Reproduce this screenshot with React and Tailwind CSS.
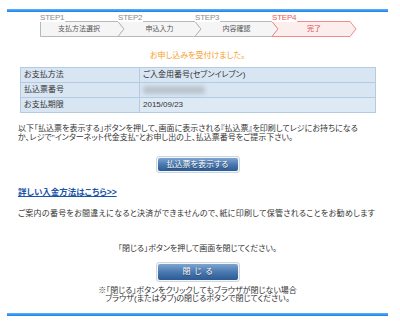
import React from "react";

const FONT = { fontFamily: "'Liberation Sans','Noto Sans CJK JP',sans-serif" };

const steps = [
  { label: "STEP1", name: "支払方法選択", w: 78, first: true },
  { label: "STEP2", name: "申込入力", w: 77 },
  { label: "STEP3", name: "内容確認", w: 77 },
  { label: "STEP4", name: "完了", w: 78, active: true },
];

function Step({ s }) {
  const w = s.w;
  const pts = s.first
    ? `0.5,0.5 ${w},0.5 ${w + 6},8 ${w},15.5 0.5,15.5`
    : `0,0.5 ${w},0.5 ${w + 6},8 ${w},15.5 0,15.5 6,8`;
  return (
    <div className="relative h-[22px] shrink-0" style={{ width: w }}>
      <svg
        className="absolute left-0 top-[6px] overflow-visible"
        width={w + 6}
        height="16"
      >
        <polygon
          points={pts}
          fill={s.active ? "#fdeeee" : "#f5f5f5"}
          stroke={s.active ? "#f08c8c" : "#b8b8b8"}
          strokeWidth="1"
        />
      </svg>
      <div
        className={`absolute left-0 top-[-1px] z-10 h-[8px] bg-white pr-[1px] text-[8px] leading-[8px] tracking-[-0.2px] ${
          s.active ? "text-[#f05656]" : "text-[#8a8a8a]"
        }`}
      >
        {s.label}
      </div>
      <div
        className={`absolute top-[6px] flex h-[16px] items-center justify-center text-[7px] ${
          s.active ? "text-[#e04848]" : "text-[#555]"
        }`}
        style={{ left: s.first ? 0 : 6, width: s.first ? w : w - 6 }}
      >
        {s.name}
      </div>
    </div>
  );
}

function Btn({ children, tall, spaced }) {
  return (
    <div className="flex justify-center">
      <div className="rounded-[3px] border border-[#cdd6df] bg-[#f3f5f7] p-[1px]">
        <div
          className={`flex w-[80px] items-center justify-center rounded-[2px] bg-gradient-to-b from-[#7ea5d0] via-[#4a78b0] to-[#2c5b93] text-[8px] text-white [text-shadow:0_1px_1px_rgba(0,0,0,0.4)] ${
            tall ? "h-[16px]" : "h-[13px]"
          } ${spaced ? "tracking-[4px] pl-[4px]" : ""}`}
        >
          {children}
        </div>
      </div>
    </div>
  );
}

export default function App() {
  return (
    <div
      className="h-[322px] w-[400px] overflow-hidden bg-white text-[#333] [font-feature-settings:'palt']"
      style={FONT}
    >
      <div className="ml-[7px] mt-[9px] h-[3px] w-[381px] bg-gradient-to-b from-[#5fb2ff] to-[#0b7fe9]" />

      <div className="ml-[40px] mt-[3px] flex">
        {steps.map((s) => (
          <Step key={s.label} s={s} />
        ))}
      </div>

      <div className="ml-[7px] w-[381px]">
        <div className="mt-[14px] h-[10px] text-center text-[8px] leading-[10px] text-[#f5a01f]">
          お申し込みを受付けました。
        </div>

        <table className="ml-[13px] mt-[6px] w-[356px] border-collapse border border-[#c4b898] text-[8px]">
          <tbody>
            <tr className="h-[15px]">
              <td className="w-[119px] border border-[#b5cbe0] bg-[#d8e6f4] pl-[3px]">お支払方法</td>
              <td className="border border-[#b5cbe0] bg-[#d8e6f4] pl-[3px]">ご入金用番号(セブンイレブン)</td>
            </tr>
            <tr className="h-[15px]">
              <td className="border border-[#b5cbe0] bg-[#d8e6f4] pl-[3px]">払込票番号</td>
              <td className="border border-[#b5cbe0] bg-[#d8e6f4] pl-[3px]">
                <div className="h-[8px] w-[62px] rounded-[3px] bg-[#b9c3cc] blur-[2px]" />
              </td>
            </tr>
            <tr className="h-[15px]">
              <td className="border border-[#b5cbe0] bg-[#d8e6f4] pl-[3px]">お支払期限</td>
              <td className="border border-[#b5cbe0] bg-[#dde9f5] pl-[3px]">2015/09/23</td>
            </tr>
          </tbody>
        </table>

        <div className="ml-[11px] mt-[11px] whitespace-nowrap text-[8px] leading-[9px]">
          以下「払込票を表示する」ボタンを押して、画面に表示される『払込票』を印刷してレジにお持ちになる
          <br />
          か、レジで"インターネット代金支払"とお申し出の上、払込票番号をご提示下さい。
        </div>

        <div className="mt-[14px]">
          <Btn>払込票を表示する</Btn>
        </div>

        <div className="ml-[11px] mt-[14px] h-[10px] text-[8.5px] font-bold leading-[10px] text-[#1a55a8] underline">
          詳しい入金方法はこちら&gt;&gt;
        </div>

        <div className="ml-[11px] mt-[12px] h-[10px] whitespace-nowrap text-[8px] leading-[10px] tracking-[0.28px]">
          ご案内の番号をお間違えになると決済ができませんので、紙に印刷して保管されることをお勧めします
        </div>

        <div className="mt-[25px] h-[10px] text-center text-[8px] leading-[10px]">
          「閉じる」ボタンを押して画面を閉じてください。
        </div>

        <div className="mt-[8px]">
          <Btn tall spaced>閉じる</Btn>
        </div>

        <div className="mt-[5px] text-center text-[8px] leading-[8px]">
          ※「閉じる」ボタンをクリックしてもブラウザが閉じない場合
          <br />
          ブラウザ(またはタブ)の閉じるボタンで閉じてください。
        </div>

        <div className="mt-[10px] h-[3px] w-[381px] bg-gradient-to-b from-[#5fb2ff] to-[#0b7fe9]" />
      </div>
    </div>
  );
}
